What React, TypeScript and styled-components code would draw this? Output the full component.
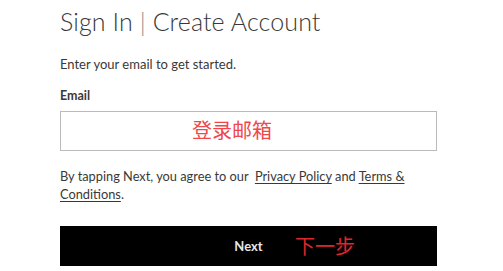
import React from "react";
import styled, { createGlobalStyle } from "styled-components";

const Global = createGlobalStyle`
  html, body { margin: 0; padding: 0; background: #fff; }
  body {
    font-family: Lato, "Noto Sans", sans-serif;
    color: #393939;
    -webkit-font-smoothing: antialiased;
  }
  * { box-sizing: border-box; }
`;

const Page = styled.div`
  width: 503px;
  height: 271px;
  overflow: hidden;
  padding: 0 0 0 60px;
`;

const Form = styled.div`
  width: 377px;
  display: flex;
  flex-direction: column;
`;

const Title = styled.h1`
  margin: 4px 0 0;
  font-family: Lato, "Noto Sans", sans-serif;
  font-weight: 300;
  font-size: 25px;
  line-height: 34px;
  color: #393939;
  letter-spacing: 0.1px;
`;

const Divider = styled.span`
  color: #8c8c8c;
  font-weight: 300;
`;

const Intro = styled.p`
  margin: 17px 0 0;
  font-size: 13px;
  line-height: 18px;
  color: #393939;
`;

const Label = styled.label`
  margin-top: 14px;
  font-size: 12.5px;
  line-height: 18px;
  font-weight: 700;
  color: #393939;
`;

const FieldWrap = styled.div`
  position: relative;
  margin-top: 6px;
`;

const Input = styled.input`
  display: block;
  width: 100%;
  height: 40px;
  border: 1px solid #bbbbbb;
  border-radius: 0;
  padding: 0 12px;
  font-size: 14px;
  font-family: inherit;
  outline: none;
`;

const Annotation = styled.span<{ $color: string; $left: number; $top: number }>`
  position: absolute;
  left: ${(p) => p.$left}px;
  top: ${(p) => p.$top}px;
  font-family: "Noto Sans CJK SC", sans-serif;
  font-size: 20px;
  line-height: 24px;
  color: ${(p) => p.$color};
  pointer-events: none;
  white-space: nowrap;
`;

const Terms = styled.p`
  margin: 16px 0 0;
  font-size: 12.8px;
  line-height: 18px;
  color: #393939;
`;

const Link = styled.a`
  color: #393939;
  text-decoration: underline;
  text-underline-offset: 2px;
`;

const ButtonWrap = styled.div`
  position: relative;
  margin-top: 23px;
`;

const NextButton = styled.button`
  display: block;
  width: 100%;
  height: 40px;
  border: 0;
  background: #000;
  color: #e6e6e6;
  font-family: Lato, "Noto Sans", sans-serif;
  font-weight: 700;
  font-size: 13px;
  cursor: pointer;
`;

export default function App() {
  return (
    <>
      <Global />
      <Page>
        <Form>
          <Title>
            Sign In <Divider>|</Divider> Create Account
          </Title>
          <Intro>Enter your email to get started.</Intro>
          <Label htmlFor="email">Email</Label>
          <FieldWrap>
            <Input id="email" type="email" />
            <Annotation $color="#f0474a" $left={132} $top={7}>
              登录邮箱
            </Annotation>
          </FieldWrap>
          <Terms>
            By tapping Next, you agree to our&nbsp; <Link>Privacy Policy</Link> and{" "}
            <Link>Terms &amp; Conditions</Link>.
          </Terms>
          <ButtonWrap>
            <NextButton>Next</NextButton>
            <Annotation $color="#e0262a" $left={235} $top={8}>
              下一步
            </Annotation>
          </ButtonWrap>
        </Form>
      </Page>
    </>
  );
}
